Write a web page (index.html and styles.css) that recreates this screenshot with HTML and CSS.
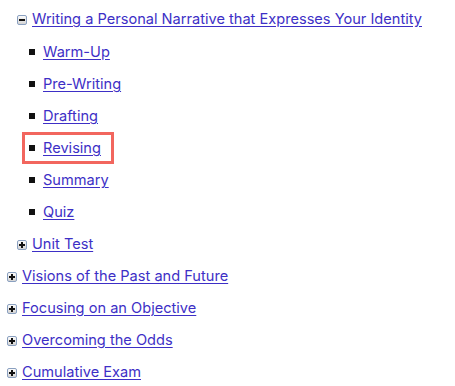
FILE: index.html
```html
<!DOCTYPE html>
<html>
<head>
<meta charset="utf-8">
<link rel="stylesheet" href="styles.css">
</head>
<body>
<ul class="tree">
  <li class="node">
    <ul class="tree sub">
      <li class="node open">
        <span class="toggle minus"></span><a href="#">Writing a Personal Narrative that Expresses Your Identity</a>
        <ul class="leaves">
          <li class="leaf"><span class="sq"></span><a href="#">Warm-Up</a></li>
          <li class="leaf"><span class="sq"></span><a href="#">Pre-Writing</a></li>
          <li class="leaf"><span class="sq"></span><a href="#">Drafting</a></li>
          <li class="leaf hl"><span class="sq"></span><a href="#">Revising</a></li>
          <li class="leaf"><span class="sq"></span><a href="#">Summary</a></li>
          <li class="leaf"><span class="sq"></span><a href="#">Quiz</a></li>
        </ul>
      </li>
      <li class="node"><span class="toggle plus"></span><a href="#">Unit Test</a></li>
    </ul>
  </li>
  <li class="node"><span class="toggle plus"></span><a href="#">Visions of the Past and Future</a></li>
  <li class="node"><span class="toggle plus"></span><a href="#">Focusing on an Objective</a></li>
  <li class="node"><span class="toggle plus"></span><a href="#">Overcoming the Odds</a></li>
  <li class="node"><span class="toggle plus"></span><a href="#">Cumulative Exam</a></li>
</ul>
</body>
</html>
```
FILE: styles.css
```css
body {
  margin: 0;
  padding: 3px 0 0 7px;
  background: #fff;
  font-family: Inter, "Noto Sans", sans-serif;
  font-size: 14.6px;
}
ul {
  list-style: none;
  margin: 0;
  padding: 0;
}
.sub {
  padding-left: 10px;
}
.node, .leaf {
  line-height: 20px;
  padding: 6px 0;
  display: block;
}
.node:first-child:has(> .sub) {
  padding: 0;
}
a {
  color: #3d2fc6;
  text-decoration: underline;
  text-underline-offset: 2px;
}
.toggle {
  display: inline-block;
  width: 10px;
  height: 10px;
  box-sizing: border-box;
  border: 1px solid #8aa0c0;
  border-radius: 2px;
  background: linear-gradient(#fbfbfb, #d4d4d4);
  margin-right: 5px;
  vertical-align: -1px;
  position: relative;
}
.toggle::before, .toggle.plus::after {
  content: "";
  position: absolute;
  background: #111;
}
.toggle::before {
  left: 1px;
  top: 3px;
  width: 6px;
  height: 2px;
}
.toggle.plus::after {
  left: 3px;
  top: 1px;
  width: 2px;
  height: 6px;
}
.leaves {
  padding-left: 12px;
  padding-top: 7px;
  margin-bottom: -6px;
}
.sq {
  display: inline-block;
  width: 6px;
  height: 6px;
  background: #111;
  margin-right: 8px;
  vertical-align: 2px;
}
.leaf.hl {
  display: inline-block;
  margin-left: -7px;
  padding: 3px 10px 3px 4px;
  border: 3px solid #f2665e;
}
```
